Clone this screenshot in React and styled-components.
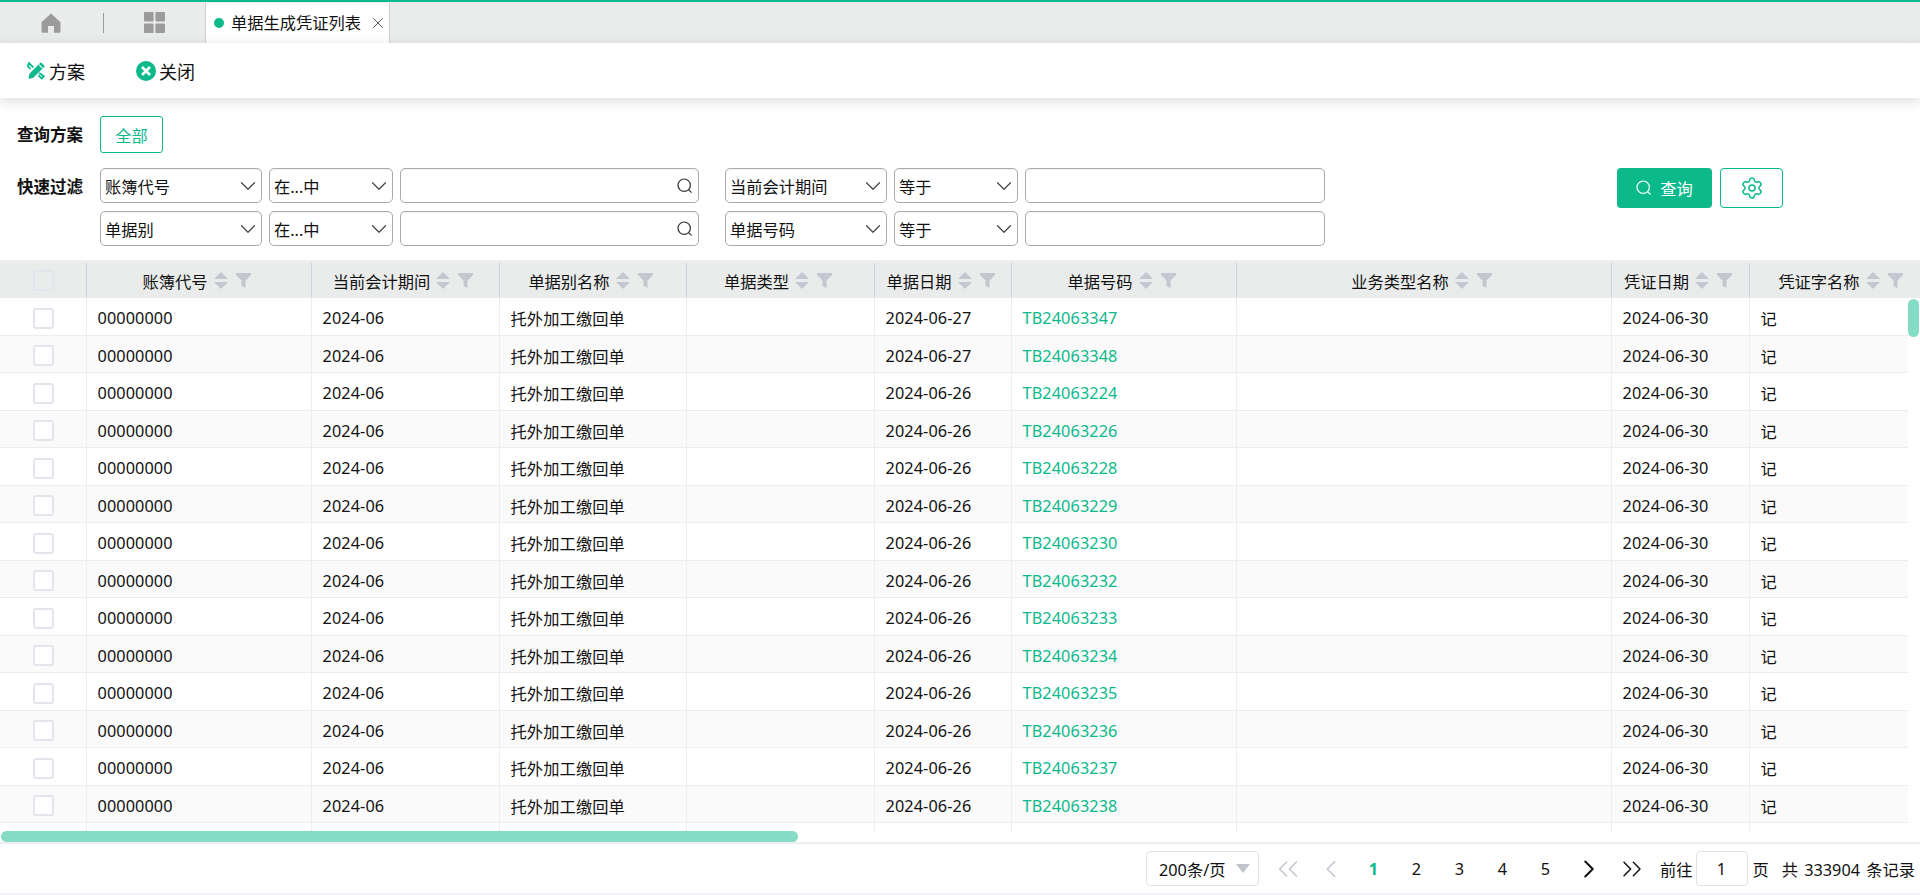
import styled, { createGlobalStyle } from 'styled-components';
import { ChevronDown, ChevronLeft, ChevronRight, ChevronsLeft, ChevronsRight, Settings, X } from 'lucide-react';

const GREEN = '#0bb98b';
const GRID = '87px 225px 188px 187px 188px 137px 225px 375px 138px 187px';

const COLUMNS = ['账簿代号', '当前会计期间', '单据别名称', '单据类型', '单据日期', '单据号码', '业务类型名称', '凭证日期', '凭证字名称'];

const ROWS = [
  ['2024-06-27', 'TB24063347'],
  ['2024-06-27', 'TB24063348'],
  ['2024-06-26', 'TB24063224'],
  ['2024-06-26', 'TB24063226'],
  ['2024-06-26', 'TB24063228'],
  ['2024-06-26', 'TB24063229'],
  ['2024-06-26', 'TB24063230'],
  ['2024-06-26', 'TB24063232'],
  ['2024-06-26', 'TB24063233'],
  ['2024-06-26', 'TB24063234'],
  ['2024-06-26', 'TB24063235'],
  ['2024-06-26', 'TB24063236'],
  ['2024-06-26', 'TB24063237'],
  ['2024-06-26', 'TB24063238'],
];

const GlobalStyle = createGlobalStyle`
  html, body {
    margin: 0;
    background: #fff;
  }
  * {
    box-sizing: border-box;
  }
  body {
    font-family: "Noto Sans", "Noto Sans CJK SC", sans-serif;
    font-size: 16.25px;
    color: #111;
  }
`;

const Page = styled.div`
  width: 1920px;
  height: 895px;
  display: flex;
  flex-direction: column;
  overflow: hidden;
`;

const TabBar = styled.div`
  height: 43px;
  flex: none;
  display: flex;
  align-items: stretch;
  background: #e9eceb;
  border-top: 2px solid ${GREEN};
`;

const NavIcons = styled.div`
  width: 205px;
  display: flex;
  align-items: center;
  padding-left: 41px;
`;

const NavDivider = styled.span`
  width: 1px;
  height: 20px;
  background: #9b9b9b;
  margin: 0 40px 0 42px;
`;

const Tab = styled.div`
  width: 185px;
  margin-top: 1px;
  display: flex;
  align-items: center;
  padding-left: 8px;
  background: #fff;
  border-left: 1px solid #cfcfcf;
  border-right: 1px solid #cfcfcf;
  line-height: 1;
`;

const TabDot = styled.span`
  width: 10px;
  height: 10px;
  border-radius: 50%;
  background: ${GREEN};
  margin-right: 7px;
`;

const TabClose = styled(X)`
  margin-left: 8px;
  color: #333;
`;

const Toolbar = styled.div`
  position: relative;
  height: 55px;
  flex: none;
  display: flex;
  align-items: center;
  gap: 51px;
  padding-left: 27px;
  background: #fff;
  box-shadow: 0 3px 12px rgba(0, 0, 0, 0.14);
`;

const ToolButton = styled.div`
  display: flex;
  align-items: center;
  gap: 3px;
  font-size: 18px;
`;

const QueryArea = styled.div`
  flex: none;
  padding: 18px 0 14px;
  display: flex;
  flex-direction: column;
  gap: 15px;
`;

const SchemeRow = styled.div`
  display: flex;
  align-items: center;
`;

const Label = styled.div`
  width: 100px;
  padding: 0 0 2px 17px;
  font-weight: 700;
  font-size: 16.5px;
`;

const SchemeButton = styled.div`
  width: 63px;
  height: 37px;
  display: flex;
  align-items: center;
  justify-content: center;
  color: ${GREEN};
  border: 1px solid ${GREEN};
  border-radius: 3px;
`;

const FilterRow = styled.div`
  display: flex;
  align-items: flex-start;
`;

const FilterLabel = styled(Label)`
  padding-bottom: 0;
  line-height: 37px;
`;

const FilterLines = styled.div`
  display: flex;
  flex-direction: column;
  gap: 8px;
`;

const FilterLine = styled.div`
  display: flex;
  gap: 26px;
`;

const FilterGroup = styled.div`
  display: flex;
  gap: 7px;
`;

const SelectBox = styled.div`
  width: ${(props) => props.$width}px;
  height: 35px;
  display: flex;
  align-items: center;
  justify-content: space-between;
  padding: 0 0 0 4px;
  border: 1px solid #aaa;
  border-radius: 5px;
  box-shadow: inset 0 1px 1px rgba(0, 0, 0, 0.06);
`;

const TextBox = styled(SelectBox)`
  padding-right: 5px;
`;

const Actions = styled.div`
  display: flex;
  gap: 8px;
  margin-left: 292px;
`;

const QueryButton = styled.div`
  width: 95px;
  height: 40px;
  display: flex;
  align-items: center;
  justify-content: center;
  gap: 8px;
  color: #fff;
  background: ${GREEN};
  border-radius: 4px;
`;

const SettingsButton = styled.div`
  width: 63px;
  height: 40px;
  display: flex;
  align-items: center;
  justify-content: center;
  color: ${GREEN};
  border: 1px solid ${GREEN};
  border-radius: 4px;
`;

const HeaderRow = styled.div`
  flex: none;
  height: 38px;
  display: grid;
  grid-template-columns: ${GRID};
  background: #e9eceb;
  border-top: 3px solid #eeeeee;
`;

const HeaderCell = styled.div`
  display: flex;
  align-items: center;
  justify-content: center;
  padding-right: 5px;
  border-right: 1px solid #c9d0de;
`;

const HeaderIcons = styled.span`
  display: flex;
  align-items: center;
  gap: 8px;
  margin-left: 6px;
  color: #c4c7d0;
`;

const CheckBox = styled.span`
  width: 21px;
  height: 21px;
  display: block;
  background: ${(props) => (props.$head ? 'transparent' : '#fff')};
  border: 2px solid #e2e5ec;
  border-radius: 3px;
`;

const CheckCell = styled.div`
  display: flex;
  align-items: center;
  justify-content: center;
  padding-top: ${(props) => (props.$head ? 0 : 4)}px;
  border-right: 1px solid ${(props) => (props.$head ? '#c9d0de' : '#ebeef0')};
`;

const TableBody = styled.div`
  flex: none;
  height: 533px;
  display: flex;
  overflow: hidden;
`;

const RowList = styled.div`
  width: 1908px;
  overflow: hidden;
`;

const Row = styled.div`
  width: 1937px;
  height: 37.5px;
  display: grid;
  grid-template-columns: ${GRID};
  background: ${(props) => (props.$striped ? '#fafafa' : '#fff')};
  border-bottom: 1px solid #ebeef0;
`;

const Cell = styled.div`
  display: flex;
  align-items: center;
  padding: 4px 0 0 10.5px;
  border-right: 1px solid #ebeef0;
  letter-spacing: 0.1px;
  white-space: nowrap;
`;

const LinkCell = styled(Cell)`
  color: ${GREEN};
`;

const VTrack = styled.div`
  width: 12px;
  flex: none;
  padding: 1px 1px 0 0;
`;

const VThumb = styled.div`
  height: 38px;
  background: #85dcc5;
  border-radius: 6px;
`;

const HTrack = styled.div`
  flex: none;
  height: 13px;
  padding-left: 1px;
  border-bottom: 2px solid #ebeef0;
`;

const HThumb = styled.div`
  width: 797px;
  height: 11px;
  background: #85dcc5;
  border-radius: 6px;
`;

const Pager = styled.div`
  flex: none;
  height: 49px;
  display: flex;
  align-items: center;
  padding-left: 1146px;
`;

const PageSize = styled.div`
  width: 113px;
  height: 35px;
  display: flex;
  align-items: center;
  justify-content: space-between;
  padding: 0 8px 0 12px;
  border: 1px solid #dfe2e8;
  border-radius: 4px;
`;

const Caret = styled.span`
  width: 0;
  height: 0;
  border-left: 7px solid transparent;
  border-right: 7px solid transparent;
  border-top: 9px solid #c0c4cc;
`;

const PagerButton = styled.span`
  width: 43px;
  height: 35px;
  display: flex;
  justify-content: center;
  align-items: center;
  color: ${(props) => (props.$active ? GREEN : props.$off ? '#c0c4cc' : '#111')};
  font-weight: ${(props) => (props.$active ? 700 : 400)};
`;

const PagerNav = styled.div`
  display: flex;
  margin-left: 7px;
  margin-right: 7px;
`;

const PageInput = styled.div`
  width: 52px;
  height: 35px;
  margin: 0 5px 0 3px;
  display: flex;
  align-items: center;
  justify-content: center;
  border: 1px solid #dfe2e8;
  border-radius: 4px;
`;

const Total = styled.span`
  margin-left: 13px;
  white-space: nowrap;
  word-spacing: 2px;
`;

const BottomLine = styled.div`
  flex: none;
  height: 2px;
  background: #f2f2f8;
`;

function HomeIcon() {
  return (
    <svg width="20" height="20" viewBox="0 0 20 20" fill="#9b9b9b">
      <path d="M10 0.5 19.5 9.2V18.5a1.2 1.2 0 0 1-1.2 1.2H13V13H7v6.7H1.7A1.2 1.2 0 0 1 .5 18.5V9.2Z" />
    </svg>
  );
}

function GridIcon() {
  return (
    <svg width="21" height="21" viewBox="0 0 21 21" fill="#9b9b9b">
      <rect x="0" y="0" width="9.6" height="9.6" rx="1" />
      <rect x="11.4" y="0" width="9.6" height="9.6" rx="1" />
      <rect x="0" y="11.4" width="9.6" height="9.6" rx="1" />
      <rect x="11.4" y="11.4" width="9.6" height="9.6" rx="1" />
    </svg>
  );
}

function PlanIcon() {
  return (
    <svg width="19" height="19" viewBox="0 0 20 19">
      <path d="M14.6.8 18.8 5 6.6 17.2 1.6 18.4 2.6 13Z" fill={GREEN} />
      <path d="M12.6 3.4 16.2 7" stroke="#fff" strokeWidth="1.2" fill="none" />
      <path d="M6.6 6.2 2.2 1.8.9 4.8 3.6 7.8" stroke={GREEN} strokeWidth="2" fill="none" />
      <path d="M12.8 12.2 17.6 15.4 15.4 17.8 12 14.6" stroke={GREEN} strokeWidth="2" fill="none" />
    </svg>
  );
}

function CloseIcon() {
  return (
    <svg width="20" height="20" viewBox="0 0 20 20">
      <circle cx="10" cy="10" r="10" fill={GREEN} />
      <path d="M6 6 14 14M14 6 6 14" stroke="#fff" strokeWidth="2.6" />
    </svg>
  );
}

function SearchIcon({ color }) {
  return (
    <svg width="16" height="16" viewBox="0 0 16 16" fill="none" stroke={color} strokeWidth="1.2">
      <circle cx="7.2" cy="7.2" r="6.2" />
      <path d="M11.8 11.8 14.6 14.6" />
    </svg>
  );
}

function SortIcon() {
  return (
    <svg width="14" height="17" viewBox="0 0 14 17" fill="currentColor">
      <path d="M7 0 14 7H0Z" />
      <path d="M7 17 0 10H14Z" />
    </svg>
  );
}

function FunnelIcon() {
  return (
    <svg width="15" height="15" viewBox="0 0 15 15" fill="currentColor">
      <path d="M0 0H15V2L9.5 7.5V15L5.5 13V7.5L0 2Z" />
    </svg>
  );
}

function Select({ width, children }) {
  return (
    <SelectBox $width={width}>
      <span>{children}</span>
      <ChevronDown size={26} strokeWidth={1.1} color="#444" />
    </SelectBox>
  );
}

function FilterSet({ field, op, search }) {
  return (
    <FilterGroup>
      <Select width={162}>{field}</Select>
      <Select width={124}>{op}</Select>
      <TextBox $width={search ? 299 : 300}>
        <span />
        {search && <SearchIcon color="#333" />}
      </TextBox>
    </FilterGroup>
  );
}

function HeadLabel({ children }) {
  return (
    <HeaderCell>
      {children}
      <HeaderIcons>
        <SortIcon />
        <FunnelIcon />
      </HeaderIcons>
    </HeaderCell>
  );
}

export default function App() {
  return (
    <Page>
      <GlobalStyle />
      <TabBar>
        <NavIcons>
          <HomeIcon />
          <NavDivider />
          <GridIcon />
        </NavIcons>
        <Tab>
          <TabDot />
          单据生成凭证列表
          <TabClose size={18} strokeWidth={1.1} />
        </Tab>
      </TabBar>
      <Toolbar>
        <ToolButton>
          <PlanIcon />
          方案
        </ToolButton>
        <ToolButton>
          <CloseIcon />
          关闭
        </ToolButton>
      </Toolbar>
      <QueryArea>
        <SchemeRow>
          <Label>查询方案</Label>
          <SchemeButton>全部</SchemeButton>
        </SchemeRow>
        <FilterRow>
          <FilterLabel>快速过滤</FilterLabel>
          <FilterLines>
            <FilterLine>
              <FilterSet field="账簿代号" op="在...中" search />
              <FilterSet field="当前会计期间" op="等于" />
            </FilterLine>
            <FilterLine>
              <FilterSet field="单据别" op="在...中" search />
              <FilterSet field="单据号码" op="等于" />
            </FilterLine>
          </FilterLines>
          <Actions>
            <QueryButton>
              <SearchIcon color="#fff" />
              查询
            </QueryButton>
            <SettingsButton>
              <Settings size={24} strokeWidth={1.5} />
            </SettingsButton>
          </Actions>
        </FilterRow>
      </QueryArea>
      <HeaderRow>
        <CheckCell $head>
          <CheckBox $head />
        </CheckCell>
        {COLUMNS.map((name) => (
          <HeadLabel key={name}>{name}</HeadLabel>
        ))}
      </HeaderRow>
      <TableBody>
        <RowList>
          {ROWS.map(([date, code], i) => (
            <Row key={code} $striped={i % 2 === 1}>
              <CheckCell>
                <CheckBox />
              </CheckCell>
              <Cell>00000000</Cell>
              <Cell>2024-06</Cell>
              <Cell>托外加工缴回单</Cell>
              <Cell />
              <Cell>{date}</Cell>
              <LinkCell>{code}</LinkCell>
              <Cell />
              <Cell>2024-06-30</Cell>
              <Cell>记</Cell>
            </Row>
          ))}
          <Row>
            {Array.from({ length: 10 }, (_, i) => (
              <Cell key={i} />
            ))}
          </Row>
        </RowList>
        <VTrack>
          <VThumb />
        </VTrack>
      </TableBody>
      <HTrack>
        <HThumb />
      </HTrack>
      <Pager>
        <PageSize>
          200条/页
          <Caret />
        </PageSize>
        <PagerNav>
          <PagerButton $off>
            <ChevronsLeft size={34} strokeWidth={1} />
          </PagerButton>
          <PagerButton $off>
            <ChevronLeft size={30} strokeWidth={1.2} />
          </PagerButton>
          <PagerButton $active>1</PagerButton>
          <PagerButton>2</PagerButton>
          <PagerButton>3</PagerButton>
          <PagerButton>4</PagerButton>
          <PagerButton>5</PagerButton>
          <PagerButton>
            <ChevronRight size={30} strokeWidth={1.6} />
          </PagerButton>
          <PagerButton>
            <ChevronsRight size={32} strokeWidth={1.1} />
          </PagerButton>
        </PagerNav>
        前往
        <PageInput>1</PageInput>
        页
        <Total>共 333904 条记录</Total>
      </Pager>
      <BottomLine />
    </Page>
  );
}
